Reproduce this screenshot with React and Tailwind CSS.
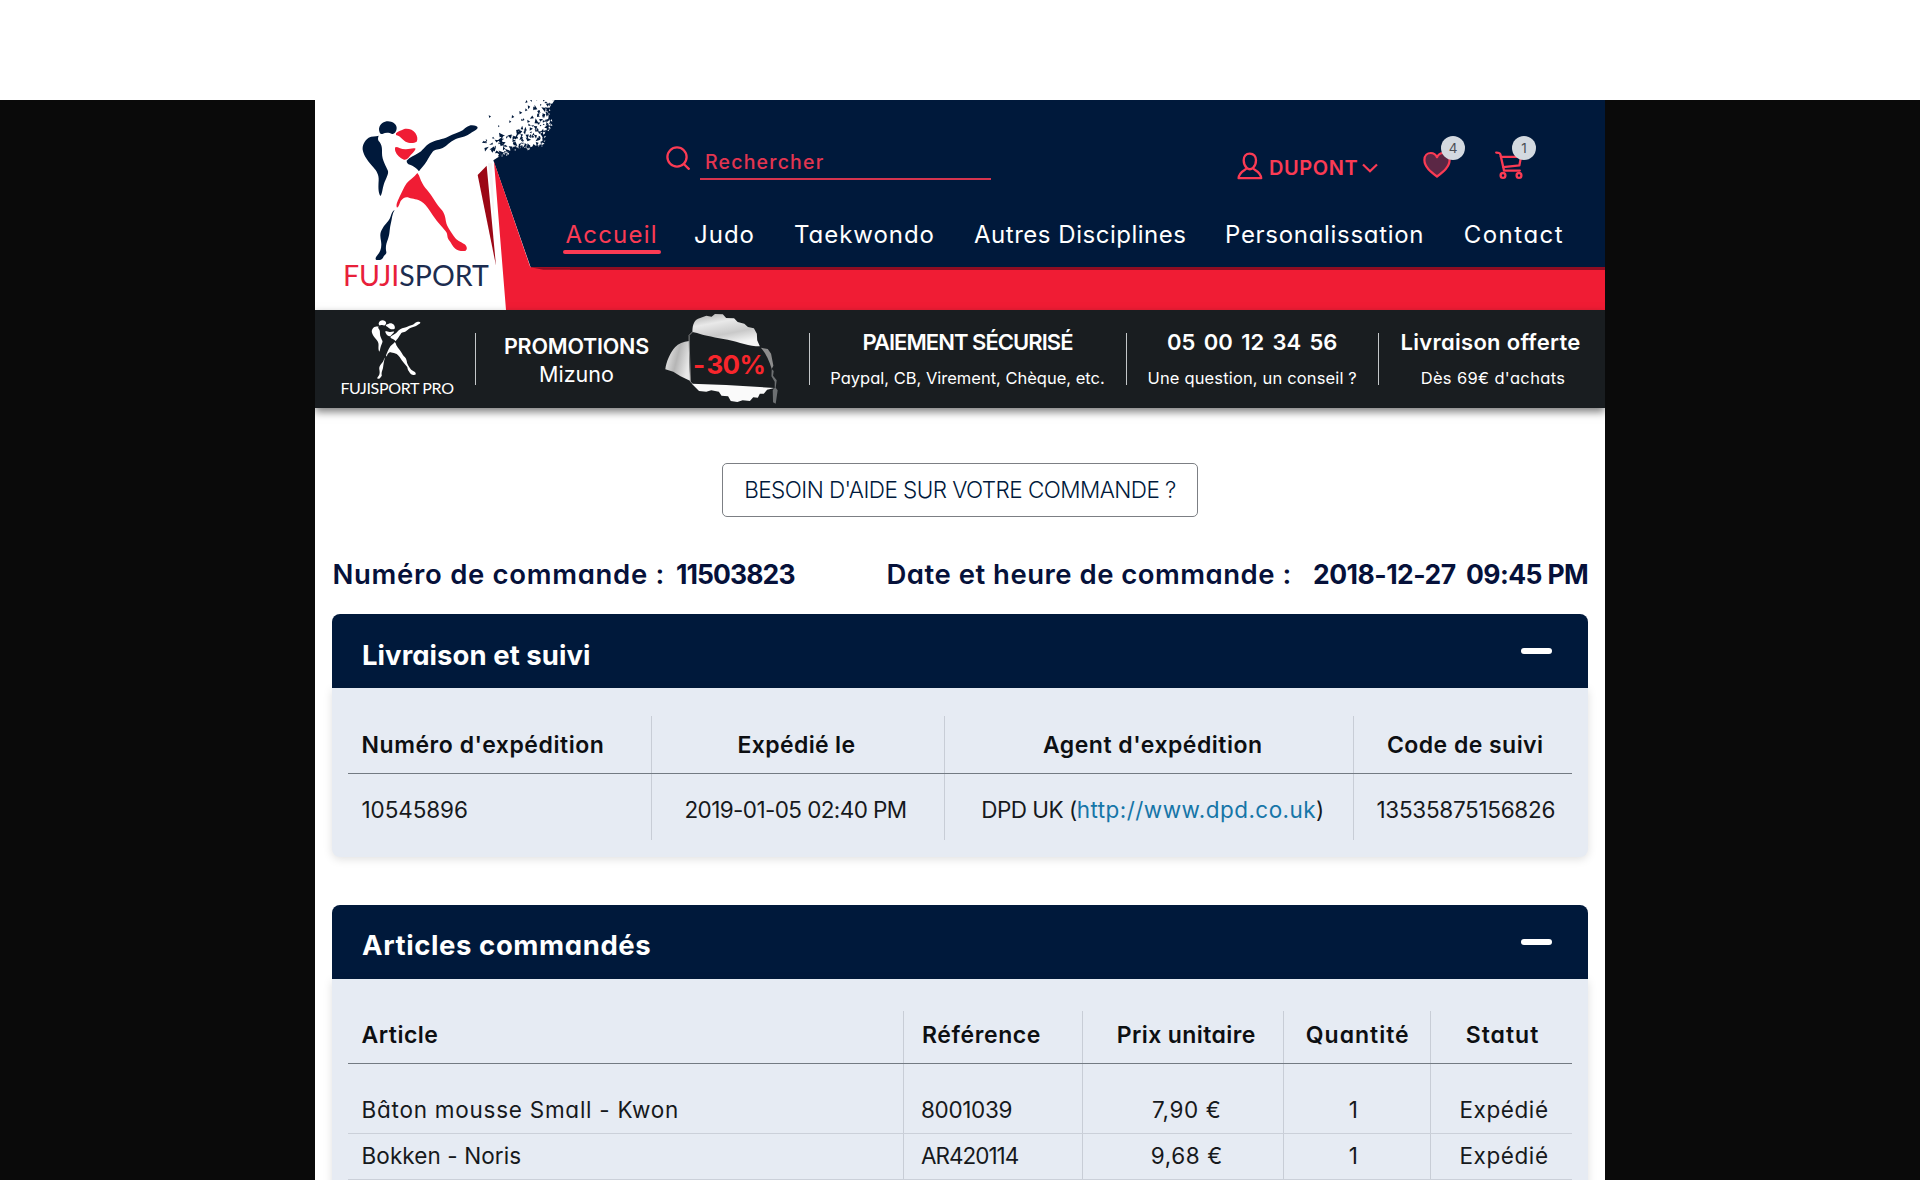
const ACCENT = "#fb3b54";

const NAV = [
  { label: "Accueil", cls: "tracking-[1.2px] text-[#fb3b54]", active: true },
  { label: "Judo", cls: "tracking-[1px] text-white" },
  { label: "Taekwondo", cls: "tracking-[0.95px] text-white" },
  { label: "Autres Disciplines", cls: "tracking-[0.52px] text-white" },
  { label: "Personalissation", cls: "tracking-[0.7px] text-white" },
  { label: "Contact", cls: "tracking-[1.5px] text-white" },
];

const FIGURE = {
  navy: [
    "M207 101C210 86 222 79 234 79C247 80 259 86 260 98C260 108 254 117 246 117C238 112 226 112 219 116C211 120 207 112 207 101Z",
    "M206 122C196 126 186 122 176 128C163 137 157 150 158 164C162 185 176 200 190 217C200 228 207 240 206 256C205 275 204 292 211 303C217 297 217 281 222 266C228 250 236 238 234 228C228 212 216 196 216 174C217 156 214 146 206 138C203 132 204 127 206 122Z",
    "M290 197C300 187 312 182 324 175C338 168 344 153 360 144C378 134 398 133 414 125C430 116 447 113 458 106C468 98 474 91 486 91C496 91 503 94 503 98C502 105 488 109 478 117C466 126 450 126 436 133C420 140 412 152 398 159C386 165 376 162 368 170C358 183 352 197 344 208C337 216 332 222 327 229C320 219 309 212 300 209C293 207 290 203 290 197Z",
    "M254 344C247 348 245 355 242 364C238 379 226 386 218 400C208 416 211 424 213 438C216 456 212 470 202 481C196 488 194 495 202 495C210 496 216 494 219 488C222 480 230 478 229 471C226 460 228 446 234 432C240 416 238 405 242 388C246 372 246 356 254 344Z",
  ],
  red: [
    "M258 115C264 108 272 108 281 103C292 99 309 104 316 114C322 122 324 134 320 140C312 145 297 145 287 140C276 134 270 122 258 120Z",
    "M257 156C266 156 275 164 288 163C300 163 308 158 317 161C313 171 304 177 298 185C293 191 288 195 282 194C270 190 260 180 256 169C255 163 254 159 257 156Z",
    "M322 234C330 243 330 254 337 265C346 282 356 288 365 303C375 318 381 330 392 341C404 353 406 366 408 380C411 396 422 408 431 423C440 437 452 440 464 448C471 454 473 463 467 467C458 470 443 467 436 461C427 454 424 443 416 434C410 425 414 417 407 409C396 395 382 381 372 366C361 350 352 332 335 320C322 311 309 312 297 308C285 305 279 310 272 318C268 326 268 334 261 338C257 330 263 318 268 307C276 291 281 278 290 265C299 254 312 247 322 234Z",
  ],
};

function Fighter({ navy, red }) {
  return (
    <g>
      {FIGURE.navy.map((d) => (
        <path key={d} d={d} fill={navy} />
      ))}
      {FIGURE.red.map((d) => (
        <path key={d} d={d} fill={red} />
      ))}
    </g>
  );
}

// Scattered fragments along the torn corner of the navy header.
const EDGE = [
  [734, 15], [712, 48], [722, 88], [700, 113], [694, 148], [660, 157], [625, 160], [580, 177], [550, 196],
];

function makeShards(count, inward, seed) {
  let s = seed;
  const rnd = () => {
    s = (s * 16807) % 2147483647;
    return s / 2147483647;
  };
  return Array.from({ length: count }, () => {
    const t = (inward ? 0.8 : 0) + rnd() * (EDGE.length - (inward ? 2.4 : 1.6));
    const i = Math.floor(t);
    const f = t - i;
    const far = rnd();
    const d = inward ? -far * 9 : far * far * 84;
    const x = EDGE[i][0] + (EDGE[i + 1][0] - EDGE[i][0]) * f - d * 0.85;
    const y = EDGE[i][1] + (EDGE[i + 1][1] - EDGE[i][1]) * f - d * 0.4;
    const r = inward ? 2 + rnd() * 2.5 : 3 + rnd() * 5.5;
    const a = rnd() * 6.28;
    const pts = [0, 1.5, 3.6].map((o) => {
      const k = r * (0.7 + rnd() * 0.7);
      return `${(x + Math.cos(a + o) * k).toFixed(1)},${(y + Math.sin(a + o) * k).toFixed(1)}`;
    });
    return pts.join(" ");
  });
}

const DARK_SHARDS = makeShards(160, false, 4127);
const LIGHT_SHARDS = makeShards(30, true, 977);

function HeaderArt() {
  return (
    <svg viewBox="15 15 765 630" className="absolute left-0 top-0 h-[210px] w-[255px]" aria-hidden="true">
      <path d="M15 15H734L712 48L722 88L700 113L694 148L660 157L625 160L580 177L550 196L662 517V645H15Z" fill="#fff" />
      <path d="M552 200L661 517H790V645H588Z" fill="#f01c34" />
      <path d="M661 517H790V524H700Z" fill="#8f0d22" />
      <path d="M530 212L503 240L558 512Z" fill="#9c0715" />
      <path d="M534 205H546L556 420Z" fill="#f4f4f5" />
      {DARK_SHARDS.map((p, i) => (
        <polygon key={i} points={p} fill="#00193b" />
      ))}
      {LIGHT_SHARDS.map((p, i) => (
        <polygon key={i} points={p} fill="#fff" />
      ))}
      <path d="M567 113l18 9-16 5zM536 61l7 3-5 5zM527 133l5 2-3 4zM606 60l7 6-8 4zM564 91l5 2-4 4zM628 48l9 5-8 5zM575 140l12 2-8 9zM598 76l6 4-6 4z" fill="#00193b" />
      <Fighter navy="#00193b" red="#f01c34" />
    </svg>
  );
}

function Header() {
  return (
    <header className="relative flex h-[210px] flex-col bg-[#00193b]">
      <HeaderArt />
      <p className="absolute left-[28px] top-[156px] font-['Lato'] text-[28.5px] leading-[38px] text-[#1c2d50]">
        <span className="text-[#e8203a]">FUJI</span>
        <span>SPORT</span>
      </p>
      <div className="relative flex h-[110px] items-start pl-[351px]">
        <svg viewBox="0 0 24 24" className="mt-[46px] h-6 w-6" fill="none" stroke={ACCENT} strokeWidth="2.3" strokeLinecap="round">
          <circle cx="11" cy="11" r="9.6" />
          <path d="M17.8 18L22.8 22.8" />
        </svg>
        <div className="ml-[10px] mt-[46px] h-[34px] w-[291px] border-b-2 border-[#d5344e] pl-[5px] text-[19.5px] font-medium leading-8 tracking-[1.2px] text-[#e23550]">
          Rechercher
        </div>
        <div className="ml-[246px] mt-[51px] flex h-[33px] w-[142px] items-center">
          <svg viewBox="0 0 26 28" className="-mt-1 h-7 w-[26px]" fill="none" stroke={ACCENT} strokeWidth="2.3" strokeLinejoin="round">
            <path d="M12.8 1.6C8.8 1.6 6.7 4.6 6.7 8.3C6.7 11.6 8.2 14.4 9.7 15.8C9.4 18.5 2.4 18.3 1.6 26.2H24.2C23.4 18.3 16.3 18.5 16 15.8C17.6 14.4 19 11.6 19 8.3C19 4.6 16.8 1.6 12.8 1.6Z" />
            <path d="M9.7 15.8Q12.8 18.6 16 15.8" />
          </svg>
          <span className="ml-[6px] text-[20px] font-semibold tracking-[0.6px] text-[#fb3b54]">DUPONT</span>
          <svg viewBox="0 0 16 10" className="ml-[4px] h-[10px] w-4" fill="none" stroke={ACCENT} strokeWidth="2.2">
            <path d="M1 1.5L8 8.2L15 1.5" />
          </svg>
        </div>
        <div className="relative ml-[44px] mt-[51px]">
          <svg viewBox="0 0 28 27" className="h-[27px] w-7" fill="#5b2745" stroke={ACCENT} strokeWidth="2.2" strokeLinejoin="round">
            <path d="M14 25.5C8 21 1.4 16 1.4 9C1.4 4.5 4.4 2 7.8 2C10.6 2 13 4 14 6.2C15 4 17.4 2 20.2 2C23.6 2 26.6 4.5 26.6 9C26.6 16 20 21 14 25.5Z" />
          </svg>
          <span className="absolute -top-[15px] left-[18px] h-6 w-6 rounded-full bg-[#d3d9e0] text-center text-[13.5px] leading-6 text-[#4b4f56]">4</span>
        </div>
        <div className="relative ml-[44px] mt-[51px]">
          <svg viewBox="0 0 28 28" className="h-7 w-7" fill="none" stroke={ACCENT} strokeWidth="2.3" strokeLinejoin="round" strokeLinecap="round">
            <path d="M1.2 1.6C4.6 1.6 5 2 5.4 3.6L9 19.6H24.8" />
            <path d="M5.8 5.8H26L24.4 14.4L8.4 16.2" />
            <circle cx="8" cy="24.4" r="2.4" />
            <circle cx="24" cy="24.4" r="2.4" />
          </svg>
          <span className="absolute -top-[15px] left-[17px] h-6 w-6 rounded-full bg-[#d3d9e0] text-center text-[13.5px] leading-6 text-[#4b4f56]">1</span>
        </div>
      </div>
      <nav className="relative grid h-[57px] grid-cols-[128.5px_100px_180px_251px_238.7px_auto] pl-[250.5px] text-[24px] leading-[49px] whitespace-nowrap">
        {NAV.map((n) => (
          <a key={n.label} className={n.cls}>
            {n.label}
            {n.active && <span className="-ml-[3px] -mt-[9.5px] block h-1 w-[98px] rounded-full bg-[#fb3b54]" />}
          </a>
        ))}
      </nav>
      <div className="ml-[205px] h-[43px] grow border-t-[3px] border-[#8f0d22] bg-[#f01c34]" />
    </header>
  );
}

function TornPaper() {
  return (
    <div className="relative ml-[15px] h-[92px] w-[113px]">
      <svg viewBox="1065 38 345 276" preserveAspectRatio="none" className="h-[92px] w-[114px]" aria-hidden="true">
        <defs>
          <linearGradient id="flap" x1="0" y1="0" x2="0.4" y2="1">
            <stop offset="0" stopColor="#a9a9a9" />
            <stop offset="0.35" stopColor="#e9e9e9" />
            <stop offset="0.7" stopColor="#c9c9c9" />
            <stop offset="1" stopColor="#f4f4f4" />
          </linearGradient>
          <linearGradient id="side" x1="0" y1="0" x2="1" y2="0.4">
            <stop offset="0" stopColor="#f5f5f5" />
            <stop offset="0.55" stopColor="#b5b5b5" />
            <stop offset="1" stopColor="#e8e8e8" />
          </linearGradient>
        </defs>
        <path d="M1148 95C1148 80 1150 62 1165 55L1190 46L1206 49L1216 41L1240 42L1250 53L1274 54L1285 65L1305 70L1316 80L1334 84L1343 100L1344 120L1352 138C1320 138 1290 125 1255 118C1220 112 1185 106 1162 98Z" fill="url(#flap)" />
        <path d="M1138 122C1120 124 1105 130 1096 140C1082 155 1068 185 1066 207L1090 214L1112 228L1142 242C1139 200 1137 160 1138 122Z" fill="url(#side)" />
        <path d="M1146 250L1250 254L1396 263L1374 268L1364 280L1352 280L1346 292L1332 291L1322 302L1300 300L1284 305L1264 302L1256 288L1236 286L1228 274L1205 270L1190 274L1168 272Z" fill="#fafafa" />
        <path d="M1355 142L1376 146L1386 160L1393 196L1388 206C1380 180 1370 158 1355 142Z" fill="#8d8d8d" />
        <path d="M1388 206L1394 212L1392 226L1403 240L1400 262L1406 270L1400 310L1392 306L1391 270L1397 262L1397 244L1387 228Z" fill="#6d7072" />
        <path d="M1148 95L1138 105V122L1142 245L1150 251" fill="none" stroke="#8b8b8b" strokeWidth="3" />
      </svg>
      <span className="absolute left-[28px] top-[35px] text-[26px] leading-[34px] font-bold tracking-[-0.7px] text-[#f8262c]">
        <span className="mr-0.5">-</span>30%
      </span>
    </div>
  );
}

const Divider = () => <div className="mt-[23px] h-[52px] w-px bg-[#c4c7c9]" />;

function PromoBar() {
  return (
    <section className="relative grid h-[98px] grid-cols-[160px_1px_332.5px_1px_316px_1px_251.5px_1px_226px] bg-[#191d20] whitespace-nowrap text-white shadow-[0_4px_8px_rgba(0,0,0,0.5)]">
      <div className="flex flex-col items-center pl-[4px] pt-[10px]">
        <svg viewBox="156 78 348 419" className="mr-[3px] h-[59px] w-[50px]" aria-hidden="true">
          <Fighter navy="#fff" red="#fff" />
        </svg>
        <span className="-mt-[1px] font-['Lato'] text-[16px] leading-5 tracking-[-0.35px]">FUJISPORT PRO</span>
      </div>
      <Divider />
      <div className="flex pl-[27px] pt-[3px]">
        <div className="w-[147px] pt-[19px] text-center text-[21.5px] leading-7">
          <div className="font-semibold tracking-[-0.2px]">PROMOTIONS</div>
          <div>Mizuno</div>
        </div>
        <TornPaper />
      </div>
      <Divider />
      <div className="pt-[14px] text-center leading-9">
        <div className="text-[22px] font-semibold tracking-[-0.95px]">PAIEMENT SÉCURISÉ</div>
        <div className="text-[16.5px]">Paypal, CB, Virement, Chèque, etc.</div>
      </div>
      <Divider />
      <div className="pt-[14px] text-center leading-9">
        <div className="text-[22px] font-semibold [word-spacing:2.8px]">05 00 12 34 56</div>
        <div className="text-[16.5px] tracking-[0.15px]">Une question, un conseil ?</div>
      </div>
      <Divider />
      <div className="pr-[3px] pt-[14px] text-center leading-9">
        <div className="text-[22px] font-semibold tracking-[0.3px]">Livraison offerte</div>
        <div className="pl-[5px] text-[16.5px] tracking-[0.35px]">Dès 69€ d'achats</div>
      </div>
    </section>
  );
}

function Panel({ title, titleCls, bodyCls, children }) {
  return (
    <section className="mx-[17px]">
      <h2 className="flex h-[74px] items-center justify-between rounded-t-lg bg-[#00193b] pl-[30px] pr-[36px] pt-[9px] text-[27.5px] font-bold text-white">
        <span className={titleCls}>{title}</span>
        <span className="mb-[9px] h-1.5 w-[31px] rounded-sm bg-white" />
      </h2>
      <div className={`rounded-b-lg bg-[#e6ebf3] px-4 shadow-[0_2px_10px_rgba(0,0,0,0.13)] ${bodyCls}`}>{children}</div>
    </section>
  );
}

const cell = "flex items-center justify-center border-r border-[#c8cdd6] last:border-r-0";
const first = "flex items-center border-r border-[#c8cdd6] pl-[13.5px]";

function Delivery() {
  return (
    <div className="text-[22.5px] whitespace-nowrap text-[#16191c]">
      <div className="grid h-[57px] grid-cols-[304px_293px_408.5px_auto] text-[23px] font-semibold text-[#0d0f12] *:pt-px">
        <div className={`${first} tracking-[0.55px]`}>Numéro d'expédition</div>
        <div className={`${cell} pr-[3px] tracking-[0.35px]`}>Expédié le</div>
        <div className={`${cell} pl-[8px] tracking-[0.5px]`}>Agent d'expédition</div>
        <div className={`${cell} pl-[5px] tracking-[0.45px]`}>Code de suivi</div>
      </div>
      <div className="grid h-[67px] grid-cols-[304px_293px_408.5px_auto] border-t-[1.5px] border-[#737a82] *:pt-[5px]">
        <div className={`${first} tracking-[-0.1px]`}>10545896</div>
        <div className={`${cell} pr-[5px] tracking-[-0.6px]`}>2019-01-05 02:40 PM</div>
        <div className={`${cell} pl-[8px]`}>
          <span className="tracking-[-0.5px]">DPD UK (</span>
          <a className="tracking-[0.45px] text-[#1676a8]">http://www.dpd.co.uk</a>)
        </div>
        <div className={`${cell} pl-[6px] tracking-[-0.3px]`}>13535875156826</div>
      </div>
    </div>
  );
}

const ITEMS = [
  { name: "Bâton mousse Small - Kwon", nameCls: "tracking-[0.75px]", ref: "8001039", refCls: "tracking-[-0.35px]", price: "7,90 €", rowCls: "h-[70px] *:pt-[23px]" },
  { name: "Bokken - Noris", nameCls: "tracking-[0.1px]", ref: "AR420114", refCls: "tracking-[-1px]", price: "9,68 €", rowCls: "h-[46px] *:pb-px" },
  { name: "", nameCls: "", ref: "", refCls: "", price: "", rowCls: "h-[46px]", empty: true },
];

function Articles() {
  return (
    <div className="text-[22.5px] whitespace-nowrap text-[#16191c]">
      <div className="grid h-[52px] grid-cols-[556px_179px_200.5px_147.5px_auto] text-[23px] font-semibold text-[#0d0f12] *:pb-[4px]">
        <div className={`${first} tracking-[0.5px]`}>Article</div>
        <div className={`${cell} justify-start! pl-[18px] tracking-[0.6px]`}>Référence</div>
        <div className={`${cell} pl-[7px] tracking-[0.4px]`}>Prix unitaire</div>
        <div className={`${cell} pl-[2px] tracking-[1px]`}>Quantité</div>
        <div className={`${cell} pl-[2px] tracking-[1px]`}>Statut</div>
      </div>
      <div className="border-t-[1.5px] border-[#737a82]">
        {ITEMS.map((it, i) => (
          <div key={i} className={`grid grid-cols-[556px_179px_200.5px_147.5px_auto] border-b border-[#cbd0d9] ${it.rowCls}`}>
            <div className={`${first} ${it.nameCls}`}>{it.name}</div>
            <div className={`${cell} justify-start! pl-[17px] ${it.refCls}`}>{it.ref}</div>
            <div className={`${cell} pl-[8px] tracking-[0.6px]`}>{it.price}</div>
            <div className={`${cell} pr-[7px]`}>{it.empty ? "" : "1"}</div>
            <div className={`${cell} pl-[5px] tracking-[0.6px]`}>{it.empty ? "" : "Expédié"}</div>
          </div>
        ))}
      </div>
    </div>
  );
}

export default function App() {
  return (
    <div className="flex h-[1180px] flex-col overflow-hidden bg-white font-['Inter',sans-serif] [font-feature-settings:'cv11']">
      <div className="h-[100px] shrink-0 bg-white" />
      <div className="flex h-[1080px] justify-center bg-[#0a0a0a]">
        <main className="w-[1290px] overflow-hidden bg-white">
          <Header />
          <PromoBar />
          <div className="flex justify-center pt-[54.5px]">
            <button className="h-[54px] w-[476px] rounded-[5px] border-[1.5px] border-[#7c7f84] text-[22.5px] font-light tracking-[-0.55px] whitespace-nowrap text-[#00193b]">
              BESOIN D'AIDE SUR VOTRE COMMANDE ?
            </button>
          </div>
          <div className="mt-[38.5px] mb-[19px] flex h-10 items-center whitespace-pre pl-[17.5px] text-[27.5px] font-semibold text-[#06113a]">
            <span className="w-[343.5px] tracking-[0.7px]">Numéro de commande :</span>
            <span className="w-[210.5px] text-[26.5px] font-bold tracking-[-0.9px]">11503823</span>
            <span className="w-[426.5px] tracking-[0.5px]">Date et heure de commande :</span>
            <span className="w-[153px] text-[26.5px] font-bold tracking-[-0.5px]">2018-12-27</span>
            <span className="text-[26.5px] font-bold tracking-[-0.6px]">09:45 PM</span>
          </div>
          <Panel title="Livraison et suivi" titleCls="tracking-[0.05px]" bodyCls="h-[169px] pt-[28px]">
            <Delivery />
          </Panel>
          <div className="h-[47.5px]" />
          <Panel title="Articles commandés" titleCls="tracking-[0.6px]" bodyCls="h-[300px] pt-[32.5px]">
            <Articles />
          </Panel>
        </main>
      </div>
    </div>
  );
}
